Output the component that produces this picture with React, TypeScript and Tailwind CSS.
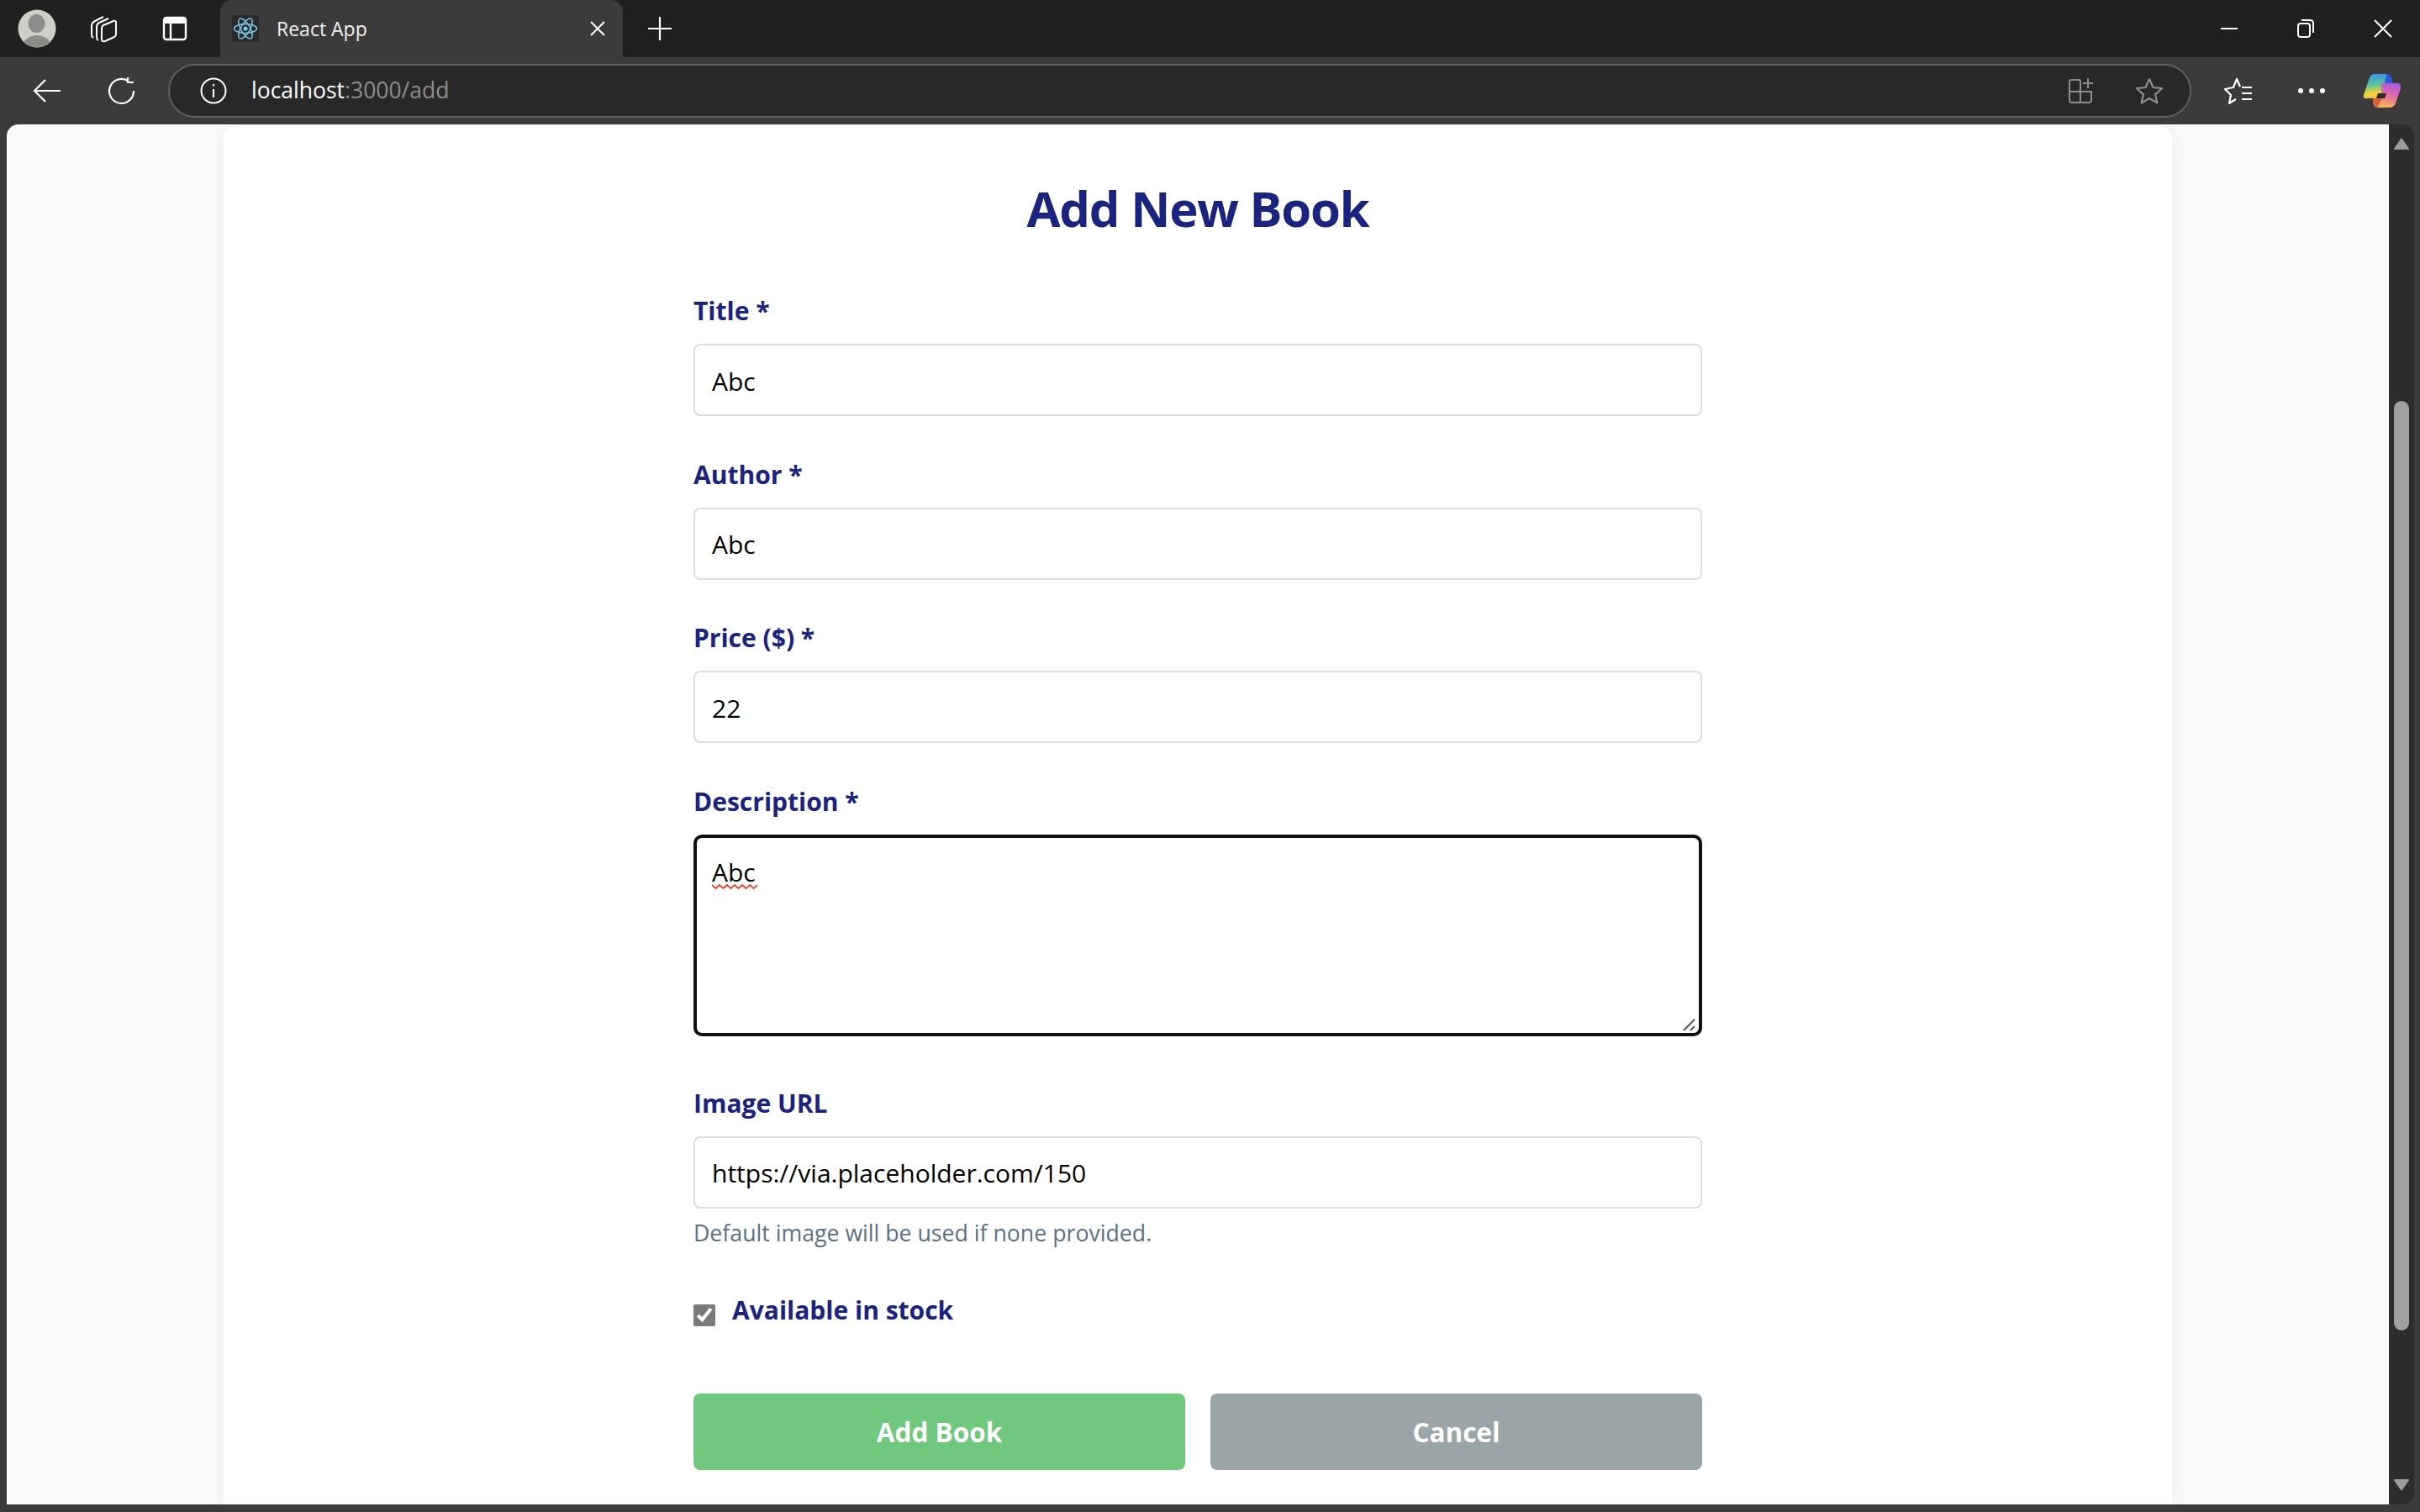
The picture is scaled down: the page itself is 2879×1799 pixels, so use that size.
import React from "react";

const F = "[font-family:'Open_Sans','Noto_Sans',sans-serif]";

function ReactLogo() {
  return (
    <div className="w-[32px] h-[32px] rounded-[3px] bg-[#2a2a2a] flex items-center justify-center">
      <svg width="30" height="30" viewBox="-15 -15 30 30" fill="none" stroke="#7cc4e0" strokeWidth="1.5">
        <circle r="2.6" fill="#7cc4e0" stroke="none" />
        <ellipse rx="13.5" ry="5.4" />
        <ellipse rx="13.5" ry="5.4" transform="rotate(60)" />
        <ellipse rx="13.5" ry="5.4" transform="rotate(120)" />
      </svg>
    </div>
  );
}

function Avatar() {
  return (
    <svg width="46" height="46" viewBox="0 0 46 46">
      <defs>
        <clipPath id="av"><circle cx="23" cy="23" r="22.5" /></clipPath>
      </defs>
      <circle cx="23" cy="23" r="22.5" fill="#cfcfca" />
      <g clipPath="url(#av)" fill="#8c8c8a">
        <ellipse cx="22.5" cy="17" rx="10" ry="11" />
        <ellipse cx="23" cy="46" rx="18" ry="15" />
      </g>
    </svg>
  );
}

function Workspaces() {
  return (
    <svg width="34" height="34" viewBox="0 0 34 34" fill="none" stroke="#fff" strokeWidth="2" strokeLinejoin="round">
      <path d="M16 3 L6 8 Q2 10 2 14 V24 Q2 27 4 28" />
      <path d="M22 5 L11 10 Q8 11.5 8 15 V27 Q8 30 10 31" />
      <path d="M16 13 L28 8 Q31 7 31 10 V24 Q31 26 29 27 L18 32 Q14 33 14 30 V17 Q14 14 16 13 Z" />
    </svg>
  );
}

function VerticalTabs() {
  return (
    <svg width="30" height="30" viewBox="0 0 30 30" fill="none" stroke="#fff" strokeWidth="2.4">
      <rect x="2" y="2" width="26" height="26" rx="3" />
      <path d="M2 6 H28" strokeWidth="6" />
      <path d="M10 8 V28" />
    </svg>
  );
}

function Copilot() {
  return (
    <svg width="46" height="42" viewBox="0 0 46 42">
      <defs>
        <linearGradient id="c1" x1="0.2" y1="0" x2="0.3" y2="1">
          <stop offset="0" stopColor="#3d8fee" />
          <stop offset="0.45" stopColor="#58c49a" />
          <stop offset="0.8" stopColor="#f2d13c" />
          <stop offset="1" stopColor="#f0c040" />
        </linearGradient>
        <linearGradient id="c2" x1="0.7" y1="0" x2="0.5" y2="1">
          <stop offset="0" stopColor="#a85be0" />
          <stop offset="0.5" stopColor="#e26aa8" />
          <stop offset="1" stopColor="#f7b455" />
        </linearGradient>
      </defs>
      <path d="M14 1 H30 L24 28 Q23 30 20 30 H3 Q0 30 1 26 L7 8 Q9 1 14 1 Z" fill="url(#c1)" />
      <path d="M28 1 Q33 1 34 6 L36 12 H26 Z" fill="#2f55d8" />
      <path d="M22 12 H41 Q46 12 45 18 L40 33 Q38 41 32 41 H17 L22 30 Z" fill="url(#c2)" />
      <path d="M12 30 H22 L17 41 Q13 41 12 36 Z" fill="#d9603c" />
      <path d="M18 24 H28 L26 30 H16 Z" fill="#2b2b2b" />
    </svg>
  );
}

function TitleBar() {
  return (
    <div className={`h-[68px] bg-[#202020] flex items-stretch shrink-0 ${F}`}>
      <div className="w-[262px] flex items-center pl-[21px] gap-[40px]">
        <Avatar />
        <div className="flex items-center gap-[52px]">
          <Workspaces />
          <VerticalTabs />
        </div>
      </div>
      <div className="w-[479px] bg-[#3b3b3b] rounded-t-[14px] flex items-center pl-[14px] pr-[20px] gap-[21px]">
        <ReactLogo />
        <span className="text-[23px] text-[#f0f0f0] flex-1">React App</span>
        <svg width="20" height="20" viewBox="0 0 20 20" stroke="#fff" strokeWidth="2">
          <path d="M2 2 L18 18 M18 2 L2 18" />
        </svg>
      </div>
      <div className="pl-[29px] flex items-center flex-1">
        <svg width="30" height="30" viewBox="0 0 30 30" stroke="#fff" strokeWidth="2.2">
          <path d="M15 1 V29 M1 15 H29" />
        </svg>
        <div className="ml-auto flex items-center pr-[33px] gap-[71px]">
          <svg width="20" height="20" viewBox="0 0 20 20" stroke="#fff" strokeWidth="2"><path d="M0 10 H20" /></svg>
          <svg width="20" height="22" viewBox="0 0 20 22" fill="none" stroke="#fff" strokeWidth="2">
            <rect x="1" y="5" width="14" height="16" rx="3" />
            <path d="M5 1 H15 Q19 1 19 5 V16" />
          </svg>
          <svg width="22" height="22" viewBox="0 0 22 22" stroke="#fff" strokeWidth="2"><path d="M1 1 L21 21 M21 1 L1 21" /></svg>
        </div>
      </div>
    </div>
  );
}

function ToolBar() {
  return (
    <div className={`h-[80px] bg-[#3b3b3b] flex items-center shrink-0 ${F}`}>
      <div className="w-[200px] flex items-center pl-[39px] gap-[55px]">
        <svg width="34" height="30" viewBox="0 0 34 30" fill="none" stroke="#fff" strokeWidth="2.2">
          <path d="M33 15 H2 M15 2 L2 15 L15 28" />
        </svg>
        <svg width="34" height="32" viewBox="0 0 34 32" fill="none" stroke="#fff" strokeWidth="2.2">
          <path d="M24 4 A14.5 14.5 0 1 0 31 16" />
          <path d="M24 0 V7 H31" transform="translate(0 -1)" />
        </svg>
      </div>
      <div className="w-[2407px] h-[64px] rounded-[32px] border-2 border-[#5f5f5f] bg-[#282828] flex items-center pl-[36px] pr-[31px]">
        <svg width="32" height="32" viewBox="0 0 32 32" fill="none" stroke="#fff" strokeWidth="2">
          <circle cx="16" cy="16" r="14.5" />
          <path d="M16 14 V24 M16 8 V10.5" />
        </svg>
        <span className="ml-[29px] text-[26.5px] text-white">
          localhost<span className="text-[#8c8c8c]">:3000/add</span>
        </span>
        <div className="ml-auto flex items-center gap-[49px]">
          <svg width="30" height="32" viewBox="0 0 30 32" fill="none" stroke="#8d8d8d" strokeWidth="2">
            <rect x="1" y="3" width="13" height="14" rx="2" />
            <path d="M1 17 H27 V27 Q27 30 24 30 H4 Q1 30 1 27 Z M14 17 V30" />
            <path d="M23 1 V13 M17 7 H29" />
          </svg>
          <svg width="34" height="32" viewBox="0 0 34 32" fill="none" stroke="#8d8d8d" strokeWidth="2.2" strokeLinejoin="round">
            <path d="M17 2 L21.5 12 L32 13.2 L24 20.4 L26.4 30.5 L17 25 L7.6 30.5 L10 20.4 L2 13.2 L12.5 12 Z" />
          </svg>
        </div>
      </div>
      <div className="flex items-center pl-[39px] gap-[54px]">
        <svg width="34" height="32" viewBox="0 0 34 32" fill="none" stroke="#fff" strokeWidth="2.2" strokeLinejoin="round">
          <path d="M19 11 L15 2 L11 12 L1 14 L8 21 L6 31 L14 26" />
          <path d="M21 12 H33 M21 19 H33 M21 26 H33" />
        </svg>
        <div className="flex gap-[7px]">
          <div className="w-[6px] h-[6px] rounded-full bg-white" />
          <div className="w-[6px] h-[6px] rounded-full bg-white" />
          <div className="w-[6px] h-[6px] rounded-full bg-white" />
        </div>
        <div className="-ml-[9px]"><Copilot /></div>
      </div>
    </div>
  );
}

function Scrollbar() {
  return (
    <div className="w-[30px] bg-[#2c2c2c] rounded-r-[14px] flex flex-col items-center shrink-0 relative">
      <svg className="mt-[16px] shrink-0" width="18" height="14" viewBox="0 0 18 14" fill="#9c9c9c" stroke="#9c9c9c" strokeWidth="2" strokeLinejoin="round">
        <path d="M9 1.5 L17 13 H1 Z" />
      </svg>
      <div className="w-[18px] h-[1106px] mt-[299px] rounded-full bg-[#a0a0a0] shrink-0" />
      <svg className="mt-auto mb-[16px] shrink-0" width="18" height="14" viewBox="0 0 18 14" fill="#9c9c9c" stroke="#9c9c9c" strokeWidth="2" strokeLinejoin="round">
        <path d="M9 12.5 L17 1 H1 Z" />
      </svg>
    </div>
  );
}

function Label({ children }: { children: React.ReactNode }) {
  return <label className="block text-[30px] leading-[44px] font-bold text-[#1a237e] mb-[17px]">{children}</label>;
}

function Field({ label, value }: { label: string; value: string }) {
  return (
    <div className="mb-[47.5px]">
      <Label>{label}</Label>
      <input
        type="text"
        defaultValue={value}
        className="block w-full h-[86px] border-2 border-[#dddddd] rounded-[8px] px-[20px] pt-[2px] text-[30px] text-black bg-white outline-none"
      />
    </div>
  );
}

function Form() {
  return (
    <form className="w-[1200px] mx-auto">
      <h1 className="text-center text-[58px] leading-[80px] tracking-[-1.2px] font-bold text-[#1a237e] mb-[60px] mt-[-8px]">Add New Book</h1>
      <Field label="Title *" value="Abc" />
      <Field label="Author *" value="Abc" />
      <Field label="Price ($) *" value="22" />
      <div className="mb-[58px] relative">
        <Label>Description *</Label>
        <textarea
          defaultValue="Abc"
          spellCheck={false}
          className="block w-full h-[240px] resize-none border-4 border-[#101010] rounded-[10px] px-[18px] pt-[21px] pb-[19px] text-[30px] leading-[40px] text-black bg-white outline-none"
        />
        <svg className="absolute left-[22px] top-[119px]" width="54" height="8" viewBox="0 0 54 8" fill="none" stroke="#e5482f" strokeWidth="1.8">
          <path d="M0 2 L4.5 6 L9 2 L13.5 6 L18 2 L22.5 6 L27 2 L31.5 6 L36 2 L40.5 6 L45 2 L49.5 6 L54 2" />
        </svg>
        <svg className="absolute right-[8px] bottom-[6px]" width="15" height="15" viewBox="0 0 15 15" fill="none" stroke="#555555" strokeWidth="2">
          <path d="M1 14 L14 1 M9 14 L14 9" />
        </svg>
      </div>
      <div className="mb-[58px]">
        <Label>Image URL</Label>
        <input
          type="text"
          defaultValue="https://via.placeholder.com/150"
          className="block w-full h-[86px] border-2 border-[#dddddd] rounded-[8px] px-[20px] pt-[2px] text-[30px] text-black bg-white outline-none"
        />
        <p className="mt-[11px] text-[26.7px] leading-[36px] text-[#5c7085]">Default image will be used if none provided.</p>
      </div>
      <div className="flex items-start mb-[80px]">
        <input type="checkbox" defaultChecked className="w-[26px] h-[26px] m-0 mt-[9px] accent-[#7a7a7a] shrink-0" />
        <span className="ml-[20px] text-[30px] leading-[32px] font-bold text-[#1a237e]">Available in stock</span>
      </div>
      <div className="flex gap-[30px]">
        <button type="button" className="flex-1 h-[91px] pt-[1px] rounded-[8px] bg-[#6fc87e] text-white text-[31.5px] font-bold">Add Book</button>
        <button type="button" className="flex-1 h-[91px] pt-[1px] rounded-[8px] bg-[#9aa5a7] text-white text-[31.5px] font-bold">Cancel</button>
      </div>
    </form>
  );
}

export default function App() {
  return (
    <div className={`w-[2879px] h-[1799px] flex flex-col bg-[#3b3b3b] overflow-hidden ${F}`}>
      <TitleBar />
      <ToolBar />
      <div className="flex h-[1642px] ml-[8px] mr-[7px] shrink-0 rounded-tl-[14px] overflow-hidden">
        <div className="flex-1 bg-[#fafafa] overflow-hidden px-[258px]">
          <div className="h-full bg-white mt-[2px] rounded-t-[16px] shadow-[0_0_20px_rgba(0,0,0,0.06)] pt-[66px]">
            <Form />
          </div>
        </div>
        <Scrollbar />
      </div>
    </div>
  );
}
